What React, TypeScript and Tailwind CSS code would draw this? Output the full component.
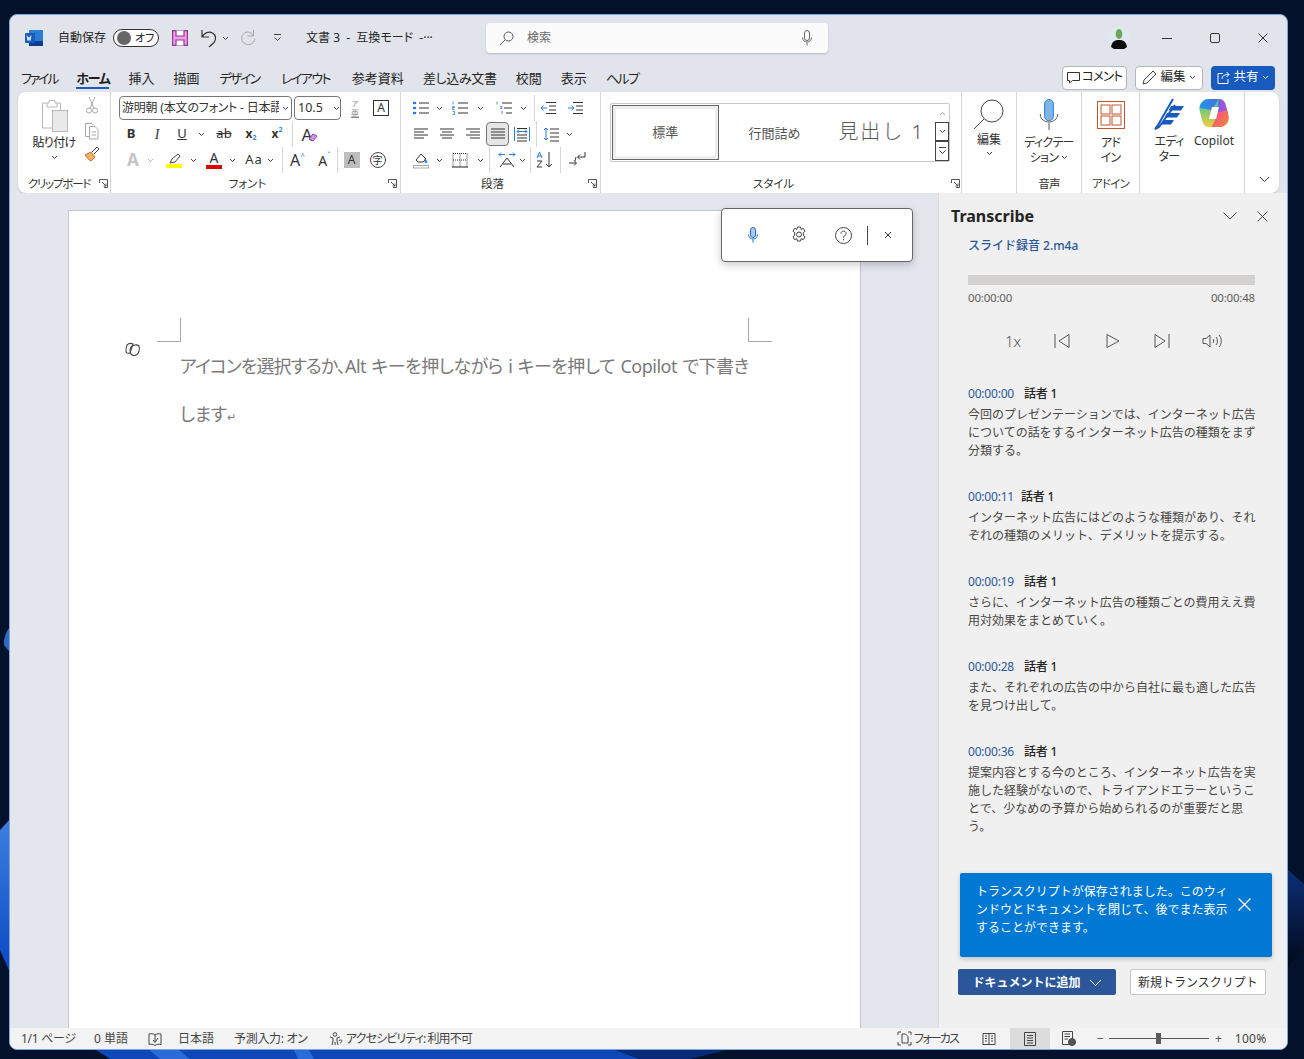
import type { ReactNode } from "react";

const S = ({ children, w = 16, h = 16, className = "" }: { children: ReactNode; w?: number; h?: number; className?: string }) => (
  <svg width={w} height={h} viewBox={`0 0 ${w} ${h}`} fill="none" stroke="currentColor" strokeWidth="1" className={`shrink-0 ${className}`}>
    {children}
  </svg>
);

const Chev = ({ className = "text-[#444]" }: { className?: string }) => (
  <S w={7} h={5} className={className}><path d="M1 1l2.500 2.500L6 1" /></S>
);

const Launcher = () => (
  <S w={9} h={9} className="text-[#555]"><path d="M.5 4V.5H8.500V8.500H5M3 3l4 4M7 4.500V7H4.500" /></S>
);

// fixed width slot inside a ribbon row
const C = ({ className, children }: { className: string; children?: ReactNode }) => (
  <div className={`flex h-full shrink-0 items-center justify-center ${className}`}>{children}</div>
);

const Sep = ({ className = "h-[26px]" }: { className?: string }) => <div className={`w-px shrink-0 bg-[#d6d6d6] ${className}`} />;

const Lines = ({ d, tone = "text-[#333]" }: { d: string; tone?: string }) => (
  <S w={16} h={14} className={tone}><path d={d} /></S>
);

const palt = "[font-feature-settings:'palt']";

const tabs = [
  { t: "ファイル", c: "tracking-[-2.2px]" },
  { t: "ホーム", c: "tracking-[-1.3px]" },
  { t: "挿入", c: "" },
  { t: "描画", c: "" },
  { t: "デザイン", c: "ml-[1px] tracking-[-2px]" },
  { t: "レイアウト", c: "ml-[3px] tracking-[-1.6px]" },
  { t: "参考資料", c: "ml-[3px]" },
  { t: "差し込み文書", c: "tracking-[-0.3px]" },
  { t: "校閲", c: "" },
  { t: "表示", c: "" },
  { t: "ヘルプ", c: "tracking-[-1.5px]" },
];

const entries = [
  { t: "00:00:00", gap: "ml-[10px]", mt: "mt-[0px]", lines: ["今回のプレゼンテーションでは、インターネット広告", "についての話をするインターネット広告の種類をまず", "分類する。"] },
  { t: "00:00:11", gap: "ml-[7px]", mt: "mt-[28px]", lines: ["インターネット広告にはどのような種類があり、それ", "ぞれの種類のメリット、デメリットを提示する。"] },
  { t: "00:00:19", gap: "ml-[10px]", mt: "mt-[28px]", lines: ["さらに、インターネット広告の種類ごとの費用ええ費", "用対効果をまとめていく。"] },
  { t: "00:00:28", gap: "ml-[10px]", mt: "mt-[28px]", lines: ["また、それぞれの広告の中から自社に最も適した広告", "を見つけ出して。"] },
  { t: "00:00:36", gap: "ml-[10px]", mt: "mt-[28px]", lines: ["提案内容とする今のところ、インターネット広告を実", "施した経験がないので、トライアンドエラーというこ", "とで、少なめの予算から始められるのが重要だと思", "う。"] },
];

function Wallpaper() {
  return (
    <svg className="absolute inset-0" width="1304" height="1059" viewBox="0 0 1304 1059">
      <defs>
        <linearGradient id="b1" x1="0" y1="0" x2="0" y2="1">
          <stop offset="0" stopColor="#3f7fe0" />
          <stop offset="1" stopColor="#0b46c4" />
        </linearGradient>
        <linearGradient id="b2" x1="0" y1="0" x2="0" y2="1">
          <stop offset="0" stopColor="#0d2f78" />
          <stop offset="1" stopColor="#020816" />
        </linearGradient>
      </defs>
      <rect width="1304" height="1059" fill="#03122a" />
      <path d="M0 830L12 817V977L0 950Z" fill="url(#b1)" />
      <path d="M4 640Q6 630 12 625V653Q7 650 4 645Z" fill="#2f68c8" />
      <path d="M1288 870L1304 884V945L1288 968Z" fill="url(#b2)" />
      <path d="M93 1048L110 1059H640L610 1048Z" fill="#0d47b8" />
      <path d="M147 1048L160 1059H190L177 1048Z" fill="#2a6bd8" />
      <path d="M293 1048L298 1059H314L308 1048Z" fill="#2a6bd8" />
      <path d="M610 1048L640 1059H690L735 1048Z" fill="#082a78" />
    </svg>
  );
}

function TitleBar() {
  return (
    <div className="flex h-[45px] shrink-0 items-center pt-[1px] text-[12px] text-[#242424]">
      <div className="ml-[15px] flex h-[18px] w-[18px] items-center justify-center">
        <svg width="18" height="16" viewBox="0 0 18 16">
          <rect x="4" y="0" width="14" height="16" rx="1" fill="#2b7cd3" />
          <rect x="4" y="11" width="14" height="5" fill="#103f91" />
          <rect x="0" y="3" width="10" height="10" rx="1" fill="#185abd" />
          <path d="M2 5.500l1 5 1-3.500 1 3.500 1-5" stroke="#fff" strokeWidth=".9" fill="none" />
        </svg>
      </div>
      <span className={`ml-[15px] ${palt}`}>自動保存</span>
      <div className="ml-[7px] flex h-[18px] w-[46px] items-center rounded-full border border-[#333] bg-white pl-[3px]">
        <div className="h-[14px] w-[14px] rounded-full bg-[#666]" />
        <span className={`ml-[4px] text-[11px] ${palt}`}>オフ</span>
      </div>
      <svg className="ml-[13px] shrink-0" width="16" height="16" viewBox="0 0 16 16" fill="none" stroke="#8e3a9d" strokeWidth="1.200">
        <path d="M.6.6H15.400V15.400H.6Z" fill="#f29be0" />
        <path d="M4 .6V6H12V.6M4 15.400V10H12V15.400" fill="#fff" />
      </svg>
      <S w={20} h={20} className="ml-[11px] text-[#333]"><path d="M3 2v7h7M3.500 8.500C5 5 10 3 13.500 5c3.500 2 4 6.500 1.500 9.500L10 19" strokeWidth="1.200" /></S>
      <Chev className="ml-[3px] text-[#444]" />
      <S w={20} h={20} className="ml-[10px] text-[#a6a6a6]"><path d="M14.500 2v6h-6M14.500 8C13 4.500 9 3 5.800 4.800 2.400 6.700 1.800 11 4 14c2.200 3 6.500 3.300 9.400 1.200 1.500-1.300 2.400-2.900 2.400-4.600" /></S>
      <S w={9} h={8} className="ml-[14px] text-[#444]"><path d="M1 .5H8M1.500 3.500L4.500 6.500 7.500 3.500" /></S>
      <span className={`ml-[24px] w-[132px] whitespace-pre ${palt}`}>文書 3  -  互換モード  -···</span>
      <div className="ml-[48px] flex h-[30px] w-[342px] shrink-0 items-center rounded-[4px] bg-[#fbfbfb] shadow-[0_1px_2px_rgba(0,0,0,0.2)]">
        <S w={15} h={15} className="ml-[13px] text-[#555]"><circle cx="9.500" cy="5.500" r="4.500" /><path d="M6.200 8.800L1 14" /></S>
        <span className="ml-[13px] text-[#6a6a6a]">検索</span>
        <S w={12} h={16} className="ml-auto mr-[15px] text-[#666]"><rect x="3.500" y=".5" width="5" height="10" rx="2.500" /><path d="M1.500 7.500c0 6 9 6 9 0M6 12.500v3" /></S>
      </div>
      <svg className="ml-[280px] shrink-0" width="22" height="22" viewBox="0 0 22 22">
        <circle cx="11" cy="11" r="11" fill="#dfe9f2" />
        <path d="M3 20c1-6 4-7 8-7s7 1 8 7l-3 2H6Z" fill="#0c0c0c" />
        <ellipse cx="11" cy="7" rx="3.300" ry="5" fill="#6ea65a" />
      </svg>
      <S w={10} h={10} className="ml-[32px] text-[#333]"><path d="M0 5.500H10" /></S>
      <S w={10} h={10} className="ml-[38px] text-[#333]"><rect x=".5" y=".5" width="9" height="9" rx="1.500" /></S>
      <S w={10} h={10} className="ml-[38px] text-[#333]"><path d="M.5.5l9 9M9.500.5l-9 9" /></S>
    </div>
  );
}

function TabBar() {
  return (
    <div className={`flex h-[32px] shrink-0 items-center pl-[11px] pt-[3px] text-[13px] text-[#242424] ${palt}`}>
      <div className="mt-[2px] flex gap-[19px]">
        {tabs.map(({ t, c }) =>
          t === "ホーム" ? (
            <div key={t} className={`relative font-bold text-[#1f1f1f] ${c}`}>
              {t}
              <div className="absolute -bottom-[1px] left-0 right-0 h-[2px] bg-[#185abd]" />
            </div>
          ) : (
            <div key={t} className={c}>{t}</div>
          ),
        )}
      </div>
      <div className="ml-auto mr-[12px] flex items-center gap-[8px] text-[12.5px]">
        <div className="flex h-[24px] w-[65px] items-center justify-center gap-[2px] rounded-[4px] border border-[#b5b5b5] bg-white tracking-[-0.8px]">
          <S w={13} h={13} className="text-[#333]"><path d="M.5 1.500H12.500V9.500H5.500L2.500 12V9.500H.5Z" /></S>
          コメント
        </div>
        <div className="flex h-[24px] w-[68px] items-center justify-center gap-[3px] rounded-[4px] border border-[#b5b5b5] bg-white">
          <S w={15} h={15} className="text-[#444]"><path d="M1 14l1-4L11 1l3 3-9 9Z" /></S>
          編集
          <Chev />
        </div>
        <div className="flex h-[24px] w-[64px] items-center justify-center gap-[3px] rounded-[4px] bg-[#185abd] text-white">
          <S w={13} h={13} className="text-white"><path d="M6 2.500H1V12.500H11V8M5 8c0-3 2-4.500 7-4.500M9.500 1l2.500 2.500L9.500 6" /></S>
          共有
          <Chev className="text-white" />
        </div>
      </div>
    </div>
  );
}

function GroupLabel({ children, launcher = true, pr = "pr-[3px]" }: { children: ReactNode; launcher?: boolean; pr?: string }) {
  return (
    <div className={`relative flex h-[18px] items-center justify-center text-[11.5px] text-[#333] ${palt}`}>
      {children}
      {launcher && <div className={`absolute right-0 top-[4px] ${pr}`}><Launcher /></div>}
    </div>
  );
}

function Clipboard() {
  return (
    <div className="flex w-[93px] shrink-0 flex-col border-r border-[#d6d6d6]">
      <div className="flex h-[83px]">
        <div className={`ml-[13px] flex w-[46px] flex-col items-center pt-[7px] text-[12px] tracking-[-0.7px] ${palt}`}>
          <svg width="30" height="34" viewBox="0 0 30 34" fill="none" stroke="#b8b8b8">
            <path d="M8 4H3.500V29H13" />
            <path d="M8 4h2V1.500h6V4h2v4H8ZM18 4h3.500v7" />
            <rect x="13.500" y="11.500" width="15" height="21" fill="#e9e9e9" />
          </svg>
          <span className="mt-[1px] leading-[18px] text-[#242424]">貼り付け</span>
          <Chev className="mt-[3px] text-[#444]" />
        </div>
        <div className="ml-[6px] flex w-[18px] flex-col items-center pt-[4px]">
          <S w={12} h={18} className="text-[#a8a8a8]"><path d="M3 1l5 11M9 1L4 12" /><circle cx="3" cy="14.500" r="2.500" /><circle cx="9" cy="14.500" r="2.500" /></S>
          <S w={16} h={18} className="mt-[8px] text-[#a8a8a8]"><path d="M5 14.500H1.500V1.500H8l2 2" /><path d="M5.500 4.500H11l3 3V17H5.500Z" /><path d="M7.500 10h4.500M7.500 13h4.500" /></S>
          <svg className="mt-[6px]" width="16" height="16" viewBox="0 0 16 16" fill="none">
            <path d="M1 9l6-3 4 5-4 4c-2-1-4-3-6-6Z" fill="#f2b06a" stroke="#c8701e" />
            <path d="M8 6l5-5 2 2-5 5" stroke="#444" />
          </svg>
        </div>
      </div>
      <GroupLabel pr="pr-[2px]"><span className="-ml-[10px] tracking-[-1.2px]">クリップボード</span></GroupLabel>
    </div>
  );
}

const Row = ({ className = "", children }: { className?: string; children: ReactNode }) => (
  <div className={`flex h-[26px] shrink-0 items-center ${className}`}>{children}</div>
);

function Font() {
  return (
    <div className="flex w-[290px] shrink-0 flex-col border-r border-[#d6d6d6] text-[#333]">
      <div className="flex h-[83px] flex-col pt-[3px]">
        <Row className="pl-[8px]">
          <div className={`flex h-[24px] w-[173px] items-center overflow-hidden rounded-[4px] border border-[#777] pl-[2px] text-[12px] tracking-[-0.2px] ${palt}`}>
            <span className="w-[157px] shrink-0 overflow-hidden whitespace-pre">游明朝 (本文のフォント - 日本語</span>
            <Chev className="ml-[3px] text-[#444]" />
          </div>
          <div className="ml-[2px] flex h-[24px] w-[47px] items-center rounded-[4px] border border-[#777] pl-[3px] text-[12.5px]">
            10.5<Chev className="ml-[10px] text-[#444]" />
          </div>
          <C className="ml-[1px] w-[26px] flex-col">
            <span className="text-[7px] leading-[8px] text-[#888]">ア</span>
            <span className="text-[8px] leading-[9px] text-[#888] underline">亜</span>
          </C>
          <C className="w-[26px]">
            <div className="flex h-[16px] w-[16px] items-center justify-center border border-[#333] text-[12px]">A</div>
          </C>
        </Row>
        <Row>
          <C className="ml-[7px] w-[26px] text-[13px] font-bold">B</C>
          <C className="w-[26px] font-['Liberation_Serif',serif] text-[14px] italic">I</C>
          <C className="w-[24px] text-[13px] underline">U</C>
          <C className="w-[14px]"><Chev /></C>
          <C className="w-[32px] text-[13px] line-through">ab</C>
          <C className="w-[22px] text-[12px] font-bold">x<span className="mt-[8px] text-[7px] text-[#2b88d8]">2</span></C>
          <C className="w-[30px] text-[12px] font-bold">x<span className="-mt-[8px] text-[7px] text-[#2b88d8]">2</span></C>
          <Sep />
          <C className="w-[28px]">
            <div className="relative text-[17px] leading-none">
              A
              <svg className="absolute -right-[6px] top-[7px]" width="10" height="9" viewBox="0 0 10 9"><path d="M5 1l4 2-4 5-4-2Z" fill="#c89ae0" stroke="#8a3fb0" /></svg>
            </div>
          </C>
        </Row>
        <Row>
          <C className="ml-[10px] w-[24px] text-[17px] font-bold text-[#c4c4c4]">A</C>
          <C className="w-[10px]"><Chev className="text-[#b5b5b5]" /></C>
          <C className="ml-[6px] w-[26px] flex-col">
            <S w={14} h={11} className="text-[#444]"><path d="M3 10l2-4 6-5 2 2-5 6Z" /></S>
            <div className="h-[4px] w-[16px] bg-[#ffff00]" />
          </C>
          <C className="w-[12px]"><Chev /></C>
          <C className="ml-[4px] w-[22px] flex-col">
            <span className="text-[14px] leading-[14px]">A</span>
            <div className="h-[4px] w-[16px] bg-[#e00000]" />
          </C>
          <C className="w-[14px]"><Chev /></C>
          <C className="ml-[3px] w-[24px] text-[13px] tracking-[1px]">Aa</C>
          <C className="w-[8px]"><Chev /></C>
          <C className="w-[8px]" />
          <Sep />
          <C className="w-[29px] text-[16px]">A<span className="-mt-[8px] text-[8px] text-[#2b88d8]">^</span></C>
          <C className="w-[25px] text-[14px]">A<span className="-mt-[8px] text-[8px] text-[#2b88d8]">ˇ</span></C>
          <Sep />
          <C className="w-[27px]"><div className="flex h-[16px] w-[16px] items-center justify-center bg-[#bdbdbd] text-[12px]">A</div></C>
          <C className="w-[25px]"><div className="flex h-[16px] w-[16px] items-center justify-center rounded-full border border-[#444] text-[10px]">字</div></C>
        </Row>
      </div>
      <GroupLabel><span className="-ml-[16px]">フォント</span></GroupLabel>
    </div>
  );
}

const D = {
  bullets: "M6 2H16M6 7H16M6 12H16",
  left: "M1 2H15M1 5H11M1 8H15M1 11H11",
  center: "M1 2H15M3 5H13M1 8H15M3 11H13",
  right: "M1 2H15M5 5H15M1 8H15M5 11H15",
  just: "M1 2H15M1 5H15M1 8H15M1 11H15",
};

function Para() {
  return (
    <div className="flex w-[200px] shrink-0 flex-col border-r border-[#d6d6d6] text-[#333]">
      <div className="flex h-[83px] flex-col pt-[3px]">
        <Row>
          <C className="ml-[11px] w-[18px]">
            <S w={16} h={14}><path d={D.bullets} /><path d="M0 1h3v2H0ZM0 6h3v2H0ZM0 11h3v2H0Z" fill="#2b7cd3" stroke="#2b7cd3" strokeWidth=".3" /></S>
          </C>
          <C className="w-[18px]"><Chev /></C>
          <C className="ml-[3px] w-[18px]">
            <S w={16} h={14}><path d={D.bullets} /><path d="M1 .5v3M.5 5.500h2v1h-2v2h2M.5 10.500h2v3h-2" stroke="#2b7cd3" strokeWidth=".8" /></S>
          </C>
          <C className="w-[22px]"><Chev /></C>
          <C className="w-[26px]">
            <S w={16} h={14}><path d="M6 2H16M8 7H16M10 12H16" /><path d="M1 .5v3M4 5.500h2v2H4M6 10v3" stroke="#2b7cd3" strokeWidth=".8" /></S>
          </C>
          <C className="w-[12px]"><Chev /></C>
          <C className="ml-[5px] w-[1px]"><Sep /></C>
          <C className="ml-[4px] w-[18px]"><S w={16} h={14}><path d="M6 1.500H16M9 5H16M9 9H16M6 12.500H16" /><path d="M7 7H1M3.500 4.500L1 7l2.500 2.500" stroke="#2b7cd3" /></S></C>
          <C className="ml-[9px] w-[18px]"><S w={16} h={14}><path d="M6 1.500H16M9 5H16M9 9H16M6 12.500H16" /><path d="M1 7H7M4.500 4.500L7 7 4.500 9.500" stroke="#2b7cd3" /></S></C>
        </Row>
        <Row>
          <C className="ml-[11px] w-[18px]"><Lines d={D.left} /></C>
          <C className="ml-[8px] w-[18px]"><Lines d={D.center} /></C>
          <C className="ml-[8px] w-[18px]"><Lines d={D.right} /></C>
          <C className="ml-[4px] !h-[24px] w-[23px] rounded-[4px] border border-[#777] bg-[#e6e6e6]"><Lines d={D.just} /></C>
          <C className="ml-[4px] w-[18px]">
            <S w={16} h={16}><path d="M3 2.500H13M3 9H13M3 12H13M3 15H13" /><path d="M.5 1V15M15.500 1V15M3 5.500H13M3 5.500l2-2M3 5.500l2 2M13 5.500l-2-2M13 5.500l-2 2" stroke="#2b7cd3" /></S>
          </C>
          <C className="ml-[5px] w-[1px]"><Sep /></C>
          <C className="ml-[5px] w-[18px]">
            <S w={16} h={16}><path d="M7 3H16M7 7H16M7 11H16M7 15H16" /><path d="M3 2v12M1 4l2-2 2 2M1 12l2 2 2-2" stroke="#2b7cd3" /></S>
          </C>
          <C className="w-[18px]"><Chev /></C>
        </Row>
        <Row>
          <C className="ml-[11px] w-[18px]">
            <S w={16} h={18}><path d="M3 9l5-6 5 5-3 3H5Z" /><path d="M12 8c1 2 2 2 2 3s-2 1-2 0 0-2 0-3Z" fill="#2b7cd3" stroke="#2b7cd3" /><rect x=".5" y="14.500" width="15" height="2.500" stroke="#aaa" /></S>
          </C>
          <C className="w-[18px]"><Chev /></C>
          <C className="ml-[3px] w-[18px]">
            <S w={16} h={16}><path d="M1 1.500H15M1 8H15M8 1.500V15M1 1.500V15M15 1.500V15" strokeDasharray="1 1" /><path d="M0 15H16" stroke="#222" strokeWidth="1.200" /></S>
          </C>
          <C className="w-[22px]"><Chev /></C>
          <C className="ml-[-2px] mr-[2px] w-[1px]"><Sep /></C>
          <C className="ml-[4px] w-[21px]">
            <S w={18} h={18}><path d="M2 16L9 7l7 9M5 13H13" /><path d="M1 3.500H7M3 1.500l-2 2 2 2M11 3.500h6M15 1.500l2 2-2 2" stroke="#2b7cd3" /></S>
          </C>
          <C className="w-[10px]"><Chev /></C>
          <C className="ml-[3px] w-[1px]"><Sep /></C>
          <C className="ml-[4px] w-[20px]">
            <S w={18} h={18}><path d="M1 7l2.500-6L6 7M2 5h3" stroke="#2b7cd3" /><path d="M1 10h5l-5 6h5M13 1v15M10 13l3 3 3-3" /></S>
          </C>
          <C className="ml-[5px] w-[1px]"><Sep /></C>
          <C className="ml-[6px] w-[20px]">
            <S w={18} h={18}><path d="M17 1v5H10M12 3.500L9.500 6l2.500 2.500M1 12h7M6 9.500L8.500 12 6 14.500M8 6l-1 4" /></S>
          </C>
        </Row>
      </div>
      <GroupLabel><span className="-ml-[16px]">段落</span></GroupLabel>
    </div>
  );
}

function Styles() {
  return (
    <div className="flex w-[361px] shrink-0 flex-col border-r border-[#d6d6d6] pl-[9px]">
      <div className="h-[83px] pt-[11px]">
        <div className="flex h-[59px] w-[340px] rounded-[2px] border border-[#c8c8c8]">
          <div className="m-[1px] flex w-[107px] items-center justify-center border border-[#666] text-[13px] text-[#555] outline-[3px] -outline-offset-4 outline-[#eee]">
            標準
          </div>
          <div className="ml-[1px] flex w-[108px] items-center justify-center pt-[2px] text-[13px] text-[#555]">行間詰め</div>
          <div className="flex w-[107px] items-center justify-center whitespace-nowrap pb-[2px] text-[20px] font-light tracking-[2px] text-[#555]">見出し 1</div>
          <div className="flex w-[14px] flex-col">
            <div className="flex h-[18px] items-center justify-center"><S w={7} h={5} className="text-[#b0b0b0]"><path d="M1 4l2.500-2.500L6 4" /></S></div>
            <div className="flex h-[19px] items-center justify-center border border-[#444] bg-white"><Chev /></div>
            <div className="flex h-[20px] items-center justify-center border border-[#444] bg-white"><S w={9} h={8} className="text-[#444]"><path d="M1 .5H8M1.500 3.500L4.500 6.500 7.500 3.500" /></S></div>
          </div>
        </div>
      </div>
      <GroupLabel pr="pr-[1px]"><span className="-ml-[24px]">スタイル</span></GroupLabel>
    </div>
  );
}

function BigButtons() {
  return (
    <>
      <div className={`flex w-[55px] shrink-0 flex-col items-center border-r border-[#d6d6d6] pt-[6px] text-[12px] text-[#333] ${palt}`}>
        <S w={32} h={32} className="text-[#444]"><circle cx="19" cy="13" r="11" fill="#fff" /><path d="M11 21L1 31" /></S>
        <span className="mt-[2px] leading-[16px]">編集</span>
        <Chev className="mt-[3px]" />
      </div>
      <div className={`flex w-[65px] shrink-0 flex-col items-center border-r border-[#d6d6d6] pt-[7px] text-[12px] tracking-[-0.7px] text-[#333] ${palt}`}>
        <svg width="22" height="32" viewBox="0 0 22 32" fill="none">
          <rect x="6.500" y=".5" width="9" height="22" rx="4.500" fill="#7db5e8" stroke="#2b7cd3" />
          <path d="M2 15.500c0 11 18 11 18 0M11 24.500V32" stroke="#555" />
        </svg>
        <span className="mt-[5px] leading-[15px]">ディクテー</span>
        <span className="flex items-center gap-[3px] leading-[15px]">ション<Chev /></span>
        <span className="mt-[10px] text-[11.5px] leading-[18px]">音声</span>
      </div>
      <div className={`flex w-[58px] shrink-0 flex-col items-center border-r border-[#d6d6d6] pt-[9px] text-[12px] tracking-[-0.7px] text-[#333] ${palt}`}>
        <svg width="28" height="28" viewBox="0 0 28 28" fill="none" stroke="#c4562a">
          <rect x=".5" y=".5" width="27" height="27" />
          <rect x="4" y="4" width="9" height="9" />
          <rect x="15" y="4" width="9" height="9" />
          <rect x="4" y="15" width="9" height="9" />
          <rect x="15" y="15" width="9" height="9" />
        </svg>
        <span className="mt-[6px] leading-[15px]">アド</span>
        <span className="leading-[15px]">イン</span>
        <span className="mt-[10px] text-[11.5px] leading-[18px]">アドイン</span>
      </div>
      <div className={`flex w-[105px] shrink-0 border-r border-[#d6d6d6] pl-[10px] pt-[6px] text-[12px] text-[#333] ${palt}`}>
        <div className="flex w-[38px] flex-col items-center">
          <svg width="32" height="32" viewBox="0 0 32 32" fill="none">
            <path d="M20 1L5 27l-3 4 4-2L22 7" stroke="#185abd" strokeWidth="2" />
            <path d="M18 8H31L28 12.500H15.500ZM14 15H27L24 19.500H11.500ZM10.500 22H21L18 26.500H8Z" fill="#185abd" />
          </svg>
          <span className="mt-[4px] leading-[15px] tracking-[-0.7px]">エディ</span>
          <span className="leading-[15px] tracking-[-0.7px]">ター</span>
        </div>
        <div className="ml-[6px] flex flex-col items-center">
          <svg width="30" height="30" viewBox="0 0 30 30">
            <defs>
              <clipPath id="cpo"><path d="M10 1H20C24 1 26 4 27 8L29.500 18C30.500 24 26 29 21 29H10C6 29 4 26 3 22L.5 12C0 6 4 1 10 1Z" /></clipPath>
              <linearGradient id="cp1" x1="0" y1="0" x2="1" y2="0"><stop offset="0" stopColor="#1f9ae0" /><stop offset="1" stopColor="#4a6ee8" /></linearGradient>
              <linearGradient id="cp2" x1="0" y1="0" x2="0" y2="1"><stop offset="0" stopColor="#2ec4a0" /><stop offset="1" stopColor="#f5cf3a" /></linearGradient>
              <linearGradient id="cp3" x1="0" y1="0" x2="1" y2="1"><stop offset="0" stopColor="#f2489a" /><stop offset="1" stopColor="#f58a2e" /></linearGradient>
              <linearGradient id="cp4" x1="0" y1="0" x2="1" y2="0"><stop offset="0" stopColor="#6a5cf0" /><stop offset="1" stopColor="#c84fd0" /></linearGradient>
            </defs>
            <g clipPath="url(#cpo)">
              <rect width="30" height="30" fill="url(#cp2)" />
              <path d="M0 0H20L13 12 0 10Z" fill="url(#cp1)" />
              <path d="M20 0H30V16L18 14Z" fill="url(#cp4)" />
              <path d="M18 14L30 12V30H12L16 22Z" fill="url(#cp3)" />
              <path d="M13 9H20L17 21H10Z" fill="#fff" />
            </g>
          </svg>
          <span className="mt-[5px] leading-[15px]">Copilot</span>
        </div>
      </div>
      <div className="flex flex-1 items-end justify-center pb-[10px]">
        <S w={11} h={7} className="ml-[4px] text-[#333]"><path d="M1 1l4.500 4.500L10 1" /></S>
      </div>
    </>
  );
}

function Dictation() {
  return (
    <div className="absolute left-[711px] top-[193px] flex h-[54px] w-[192px] items-center rounded-[4px] border border-[#666] bg-white text-[#444] shadow-[0_3px_8px_rgba(0,0,0,0.2)]">
      <S w={12} h={16} className="ml-[25px] text-[#2b6cc4]"><rect x="3.500" y=".5" width="5" height="10" rx="2.500" fill="#a9c9ee" /><path d="M1.500 7.500c0 6 9 6 9 0M6 12.500v3" /></S>
      <S w={18} h={18} className="ml-[31px]"><path d="M7.500 1h3l.6 2.300 2.300-.9 1.600 2.800-1.800 1.600c.2.800.2 1.600 0 2.400l1.800 1.600-1.600 2.800-2.300-.9-.6 2.300h-3l-.6-2.300-2.300.9-1.600-2.800 1.800-1.600c-.2-.8-.2-1.600 0-2.400L3 5.200l1.600-2.800 2.300.9Z" /><circle cx="9" cy="8.500" r="2.500" /></S>
      <S w={17} h={17} className="ml-[27px]"><circle cx="8.500" cy="8.500" r="8" /><path d="M6 6.500c0-3.200 5-3.200 5 0 0 2.200-2.500 2.200-2.500 4.300M8.500 12v1.300" /></S>
      <div className="ml-[15px] h-[19px] w-px bg-[#444]" />
      <S w={8} h={8} className="ml-[16px] text-[#333]"><path d="M1 1l6 6M7 1L1 7" /></S>
    </div>
  );
}

function Doc() {
  return (
    <div className="relative flex-1 overflow-hidden bg-[#e3e6ec] pl-[58px] pt-[17px]">
      <div className="relative h-[830px] w-[793px] border border-[#c4c6ca] bg-white">
        <div className="absolute left-[88px] top-[107px] h-[24px] w-[24px] border-b border-r border-[#a8a8a8]" />
        <div className="absolute left-[679px] top-[107px] h-[24px] w-[24px] border-b border-l border-[#a8a8a8]" />
        <div className="absolute left-[55px] top-[131px]">
          <svg width="18" height="16" viewBox="0 0 18 16" fill="none" stroke="#444" strokeWidth="1.100">
            <path d="M3 3c2-2 4-2 6-1l-3 9c-2 1-4 0-4-2 0-2 0-4 1-6Z" />
            <path d="M7 5c2-2 6-3 8-1 1 3 0 8-3 9-2 1-4 0-5-1-1-2-1-5 0-7Z" />
          </svg>
        </div>
        <div className={`pl-[111px] pt-[131px] text-[18px] leading-[48px] tracking-[-0.5px] text-[#7a7a7a] ${palt}`}>
          <div className="whitespace-pre [word-spacing:1.2px]"><span className="tracking-[-1px]">アイコンを選択するか、</span>Alt キーを押しながら i キーを押して Copilot で下書き</div>
          <div>します<span className="text-[11px]">↵</span></div>
        </div>
      </div>
    </div>
  );
}

function Transcribe() {
  return (
    <div className="flex w-[349px] shrink-0 flex-col border-l border-[#dcdcdc] bg-[#f0f0f0] pl-[12px] text-[12px]">
      <div className="flex h-[44px] items-center pt-[2px]">
        <span className="w-[84px] text-[16px] font-bold text-[#252423]">Transcribe</span>
        <S w={14} h={8} className="ml-[188px] text-[#444]"><path d="M.5.5L7 7l6.500-6.500" /></S>
        <S w={11} h={11} className="ml-[20px] text-[#444]"><path d="M.5.5l10 10M10.500.5l-10 10" /></S>
      </div>
      <div className="pl-[17px] pr-[32px]">
        <div className="h-[18px] text-[12px] font-medium leading-[18px] text-[#2b579a]">スライド録音 2.m4a</div>
        <div className="mt-[20px] h-[10px] bg-[#d4d2d0]" />
        <div className="mt-[4px] flex justify-between text-[11.5px] leading-[18px] tracking-[-0.2px] text-[#605e5c]">
          <span>00:00:00</span>
          <span>00:00:48</span>
        </div>
        <div className="mt-[24px] flex h-[20px] items-center text-[#555]">
          <span className="ml-[37px] w-[16px] text-[15px] font-light">1x</span>
          <S w={16} h={16} className="ml-[26px] translate-x-[7px]"><path d="M1 1v14M15 1.500V14.500L5 8Z" /></S>
          <S w={14} h={16} className="ml-[35px] translate-x-[8px]"><path d="M1 1.500V14.500L13 8Z" /></S>
          <S w={16} h={16} className="ml-[34px] translate-x-[8px]"><path d="M15 1v14M1 1.500V14.500L11 8Z" /></S>
          <S w={22} h={16} className="ml-[32px] translate-x-[8px]"><path d="M1 5.500H4L8 2V14L4 10.500H1ZM11 6c1 1 1 3 0 4M14 4c2 2 2 6 0 8M17 2c3 3 3 9 0 12" /></S>
        </div>
        <div className="mt-[34px]">
          {entries.map((e) => (
            <div key={e.t} className={e.mt}>
              <div className="flex h-[18px] items-center leading-[18px] tracking-[-0.2px]">
                <span className="text-[#2b579a]">{e.t}</span>
                <span className={`${e.gap} font-medium text-[#252423]`}>話者 1</span>
              </div>
              <div className="mt-[3px] text-[#484644]">
                {e.lines.map((l) => (
                  <div key={l} className="h-[18px] whitespace-nowrap leading-[18px]">{l}</div>
                ))}
              </div>
            </div>
          ))}
        </div>
      </div>
      <div className="ml-[9px] mt-auto flex h-[84px] w-[312px] shrink-0 rounded-[2px] bg-[#0078d4] pl-[16px] pt-[10px] text-white shadow-[0_2px_5px_rgba(0,0,0,0.2)]">
        <div className="w-[254px] leading-[18px]">
          トランスクリプトが保存されました。このウィンドウとドキュメントを閉じて、後でまた表示することができます。
        </div>
        <S w={13} h={13} className="ml-[8px] mt-[15px] text-white"><path d="M.5.5l12 12M12.500.5l-12 12" strokeWidth="1.300" /></S>
      </div>
      <div className="mb-[33px] ml-[7px] mt-[12px] flex h-[26px] shrink-0">
        <div className="flex w-[158px] items-center justify-center gap-[8px] rounded-[2px] bg-[#2b579a] pt-[1px] font-bold text-white">
          ドキュメントに追加
          <S w={13} h={8} className="text-white"><path d="M1 1l5.500 5.500L12 1" /></S>
        </div>
        <div className="ml-[14px] flex w-[136px] items-center justify-center rounded-[2px] border border-[#c8c6c4] bg-white pt-[1px] text-[#323130]">
          新規トランスクリプト
        </div>
      </div>
    </div>
  );
}

function StatusBar() {
  return (
    <div className={`flex h-[21px] shrink-0 items-center whitespace-nowrap bg-[#f3f3f3] text-[12px] text-[#444] ${palt}`}>
      <span className="ml-[11px] w-[54px] tracking-[-0.3px]">1/1 ページ</span>
      <span className="ml-[19px] w-[36px]">0 単語</span>
      <S w={14} h={14} className="ml-[18px]"><path d="M7 3C5 1.500 3 1.500 1 2V12.500C3 12 5 12 7 13.500 9 12 11 12 13 12.500V2C11 1.500 9 1.500 7 3ZM7 3V9M5 8l2 2.500L10 6" /></S>
      <span className="ml-[16px] w-[36px]">日本語</span>
      <span className="ml-[20px] w-[75px] tracking-[-0.3px]">予測入力: オン</span>
      <S w={14} h={14} className="ml-[20px]"><circle cx="6" cy="2.500" r="1.800" /><path d="M1 5l3 1v3l-1 4M11 5L8 6v3l1 4M6 10v3" /><path d="M10 9c0-1.500 3-1.500 3 0 0 1-1.500 1-1.500 2.500" /></S>
      <span className="ml-[3px] w-[125px] tracking-[-0.9px]">アクセシビリティ: 利用不可</span>
      <S w={15} h={15} className="ml-[426px]"><path d="M1 4V1h3M14 4V1h-3M1 11v3h3M14 11v3h-3" /><path d="M5 3h3.500L11 5.500V12H5Z" /></S>
      <span className="ml-[2px] w-[44px] tracking-[-1.8px]">フォーカス</span>
      <S w={14} h={14} className="ml-[24px]"><path d="M1 1.500H13V12.500H1ZM7 1.500V12.500M3 4h2M3 6.500h2M3 9h2M9 4h2M9 6.500h2M9 9h2" /></S>
      <div className="ml-[14px] flex h-full w-[40px] items-center justify-center bg-[#dcdcdc]">
        <S w={12} h={14}><path d="M.5.5H11.500V13.500H.5ZM3 3.500H9M3 6H9M3 8.500H9M3 11H9" /></S>
      </div>
      <S w={15} h={15} className="ml-[11px]"><path d="M8 13.500H1.500V.5H11.500V7M3.500 3H9M3.500 5.500H9M3.500 8H7" /><circle cx="11" cy="11" r="3.500" fill="#555" /></S>
      <span className="ml-[21px] text-[#555]">−</span>
      <div className="relative ml-[5px] h-px w-[100px] bg-[#555]">
        <div className="absolute -top-[5px] left-[47px] h-[11px] w-[5px] bg-[#5a5a5a]" />
      </div>
      <span className="ml-[6px] text-[#555]">+</span>
      <span className="ml-[13px] tracking-[0.3px]">100%</span>
    </div>
  );
}

export default function App() {
  return (
    <div className="relative h-[1059px] w-[1304px] overflow-hidden font-['Noto_Sans','Noto_Sans_CJK_JP',sans-serif]">
      <Wallpaper />
      <div className="relative left-[9px] top-[14px] flex h-[1036px] w-[1279px] flex-col overflow-hidden rounded-[8px] border border-[#7aa8e0] bg-[#e1e4ea]">
        <TitleBar />
        <TabBar />
        <div className="mx-[8px] flex h-[101px] shrink-0 rounded-[8px] bg-white shadow-[0_1px_2px_rgba(0,0,0,0.15)]">
          <Clipboard />
          <Font />
          <Para />
          <Styles />
          <BigButtons />
        </div>
        <div className="flex min-h-0 flex-1">
          <Doc />
          <Transcribe />
        </div>
        <Dictation />
        <StatusBar />
      </div>
    </div>
  );
}
